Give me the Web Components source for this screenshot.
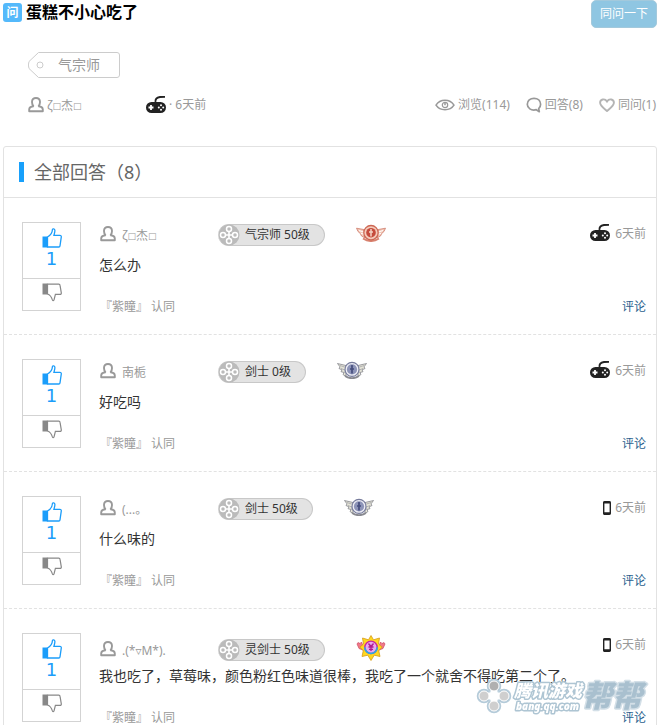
<!DOCTYPE html>
<html lang="zh-CN">
<head>
<meta charset="utf-8">
<title>蛋糕不小心吃了</title>
<style>
  html { height: 100vh; overflow: hidden; }
  body {
    margin: 0;
    background: #fff;
    color: #333;
    font: 12px/18px "Noto Sans", "Noto Sans CJK SC", "DejaVu Sans", sans-serif;
  }
  main { padding: 0 1px 0 3px; }
  small { font-size: 9px; line-height: 9px; font-family: "DejaVu Sans", sans-serif; vertical-align: 1px; }
</style>
</head>
<body>
<main>
  <question-header views="114" answers="8" likes="1" tag="气宗师" when="6天前">
    <span slot="title">蛋糕不小心吃了</span>
    <span slot="author">ζ<small>□</small>杰<small>□</small></span>
  </question-header>
  <answer-list total="8">
    <answer-item votes="1" role-name="气宗师 50级" rank="red" device="gamepad" when="6天前">
      <span slot="author">ζ<small>□</small>杰<small>□</small></span>
      怎么办
      <span slot="agree">『紫瞳』 认同</span>
    </answer-item>
    <answer-item votes="1" role-name="剑士 0级" rank="silver" device="gamepad" when="6天前">
      <span slot="author">南栀</span>
      好吃吗
      <span slot="agree">『紫瞳』 认同</span>
    </answer-item>
    <answer-item votes="1" role-name="剑士 50级" rank="silver" device="phone" when="6天前">
      <span slot="author">(...。</span>
      什么味的
      <span slot="agree">『紫瞳』 认同</span>
    </answer-item>
    <answer-item votes="1" role-name="灵剑士 50级" rank="star" device="phone" when="6天前">
      <span slot="author">.(*▿M*).</span>
      我也吃了，草莓味，颜色粉红色味道很棒，我吃了一个就舍不得吃第二个了。
      <span slot="agree">『紫瞳』 认同</span>
    </answer-item>
  </answer-list>
</main>
<site-watermark></site-watermark>

<script>
const ICONS = {
  user: [16, 16, `<path d="M5.600 9.600C4.600 8.300 4 6.600 4 5c0-2.600 1.500-4 4-4s4 1.400 4 4c0 1.600-.6 3.300-1.600 4.600" fill="none" stroke="#999" stroke-width="1.900"/>
    <path d="M5.600 9.200C2.600 9.400 1.200 10.600 1.200 12.600v1.600h13.600v-1.600c0-2-1.400-3.200-4.400-3.400" fill="none" stroke="#999" stroke-width="1.900" stroke-linejoin="round"/>`],
  gamepad: [22, 18, `<path d="M10.500 6C10 2.500 12 1.500 15 1l5-.1" fill="none" stroke="#222" stroke-width="1.800"/>
    <rect x="1" y="6" width="20" height="11" rx="5.500" fill="#222"/>
    <path d="M6 9v5M3.500 11.500h5" stroke="#fff" stroke-width="1.800"/>
    <g fill="#fff"><circle cx="16" cy="9.300" r="1"/><circle cx="16" cy="13.700" r="1"/><circle cx="13.800" cy="11.500" r="1"/><circle cx="18.200" cy="11.500" r="1"/></g>`],
  phone: [8, 14, `<rect x=".7" y=".7" width="6.600" height="12.600" rx="1" fill="#fff" stroke="#222" stroke-width="1.400"/>
    <path d="M.5 1.500h7M.5 12.300h7" stroke="#222" stroke-width="2"/>`],
  eye: [20, 12, `<g fill="none" stroke="#999" stroke-width="1.500"><path d="M1 6.200C5-.3 15-.3 19 6.200C15 12.300 5 12.300 1 6.200z"/>
    <circle cx="10" cy="6" r="2.700" stroke-width="1.200"/><path d="M10 3.500v2.700"/></g>`],
  bubble: [16, 16, `<path d="M10.300 12.700C5 14 1.300 11 1.300 7.300C1.300 3.800 4.200 1.300 8 1.300s6.600 2.500 6.600 6c0 1.900-.8 3.400-1.900 4.400l.6 3z" fill="none" stroke="#999" stroke-width="1.700" stroke-linejoin="round"/>`],
  heart: [16, 14, `<path d="M8 13C4.500 10 1.100 7.700 1.100 4.700C1.100 1.200 5.800 0 8 3.400C10.200 0 14.900 1.200 14.900 4.700C14.900 7.700 11.500 10 8 13z" fill="none" stroke="#b4b4b4" stroke-width="1.900"/>`],
  up: [20, 20, `<path d="M.5 8.500h5v11h-5z" fill="#1b9dfa"/><path d="M5.500 9C9 7 10.300 4.500 10.400 1.800c0-1.400 2.500-1.200 2.500.7c0 1.800-.6 3.300-1 4.900h6c1 0 1.500.6 1.400 1.500l-1.300 9c-.1.700-.5 1.100-1.200 1.100H5.500z" fill="none" stroke="#1b9dfa" stroke-width="1.300"/>`],
  down: [20, 19, `<path d="M.5.500h5v11h-5z" fill="#888"/><path d="M5.500 1.100h11.300c.7 0 1.100.4 1.200 1.100l1.300 7.700c.1.900-.4 1.500-1.400 1.500h-4.500l-1.300 5.300c-.3 1.300-1.300 1.300-1.700.2C9.600 14.300 8.500 11.900 5.500 11z" fill="none" stroke="#888" stroke-width="1.200"/>`],
  reel: [22, 22, `<circle cx="11" cy="11" r="10.500" fill="#bbb"/>
    <g fill="#bbb" stroke="#fff" stroke-width="1.500"><circle cx="11" cy="5" r="2.500"/><circle cx="11" cy="17" r="2.500"/><circle cx="5" cy="11" r="2.500"/><circle cx="17" cy="11" r="2.500"/></g>
    <path d="M11 8v6M8 11h6" stroke="#fff" stroke-width="1.600"/>`],
  red: [30, 18, `<g stroke="#c96f5d" stroke-width=".7" fill="#f3c8b7"><path d="M9 14L5.500 12 4.300 9.500 2 7.500.5 4.200l7.200 1.300z"/><path d="M21 14l3.500-2 1.200-2.500L28 7.500l1.500-3.300-7.200 1.300z"/></g>
    <path d="M3 6.500l6 2M5 9.500l5 1M27 6.500l-6 2M25 9.500l-5 1" stroke="#fff" stroke-width="1"/>
    <path d="M7 14.500q8 5 16 0" fill="none" stroke="#d8826f" stroke-width="2"/>
    <circle cx="15" cy="8.700" r="7.200" fill="#f4cbbb" stroke="#cd6754" stroke-width="1.300"/><circle cx="15" cy="8.700" r="4.800" fill="#c54b3c"/>
    <path d="M15 5v7.500M13 8h4" stroke="#f3d3c4" stroke-width="1.500"/>`],
  silver: [30, 18, `<g stroke="#777881" stroke-width=".7" fill="#e4e3d7"><path d="M9 15.500L6 13.500l1-2-3-.8 1-1.800L2 7.500l1-1.600L.5 2.500 9 4.500z"/><path d="M21 15.500l3-2-1-2 3-.8-1-1.800 3-1.400-1-1.600 2.500-3.400L21 4.500z"/></g>
    <path d="M3 4.500l6 2M4 7.500l5 2M7 11l3 1M27 4.500l-6 2M26 7.500l-5 2M23 11l-3 1" stroke="#a5a6a8" stroke-width=".8"/>
    <path d="M8 15q7 4.500 14 0" fill="none" stroke="#888990" stroke-width="1.800"/>
    <circle cx="15" cy="8.400" r="7" fill="#eeeef5" stroke="#777c9c" stroke-width="1.200"/><circle cx="15" cy="8.400" r="5.100" fill="#8d94b8"/>
    <path d="M15 5.500v7M13 8h4" stroke="#464e7d" stroke-width="1.700"/><circle cx="15" cy="5" r="1.100" fill="#464e7d"/>`],
  star: [30, 26, `<g fill="#f0798a" stroke="#c83b55" stroke-width=".6"><path d="M1 9l1-1.500 2 1 1.500-1.500 3.500 9-6-2.500z"/><path d="M29 9l-1-1.500-2 1-1.500-1.500-3.500 9 6-2.500z"/></g>
    <path d="M15 .5l2.500 4.300 6-1.800-1 6 3.700 3.200-3.500 3.300 1.300 6-5.800-1.300L15 25.500l-3.200-5.300L6 21.500l1.300-6-3.500-3.300L7.500 9l-1-6 6 1.800z" fill="#ffd81f" stroke="#d59a1b" stroke-width=".8"/>
    <circle cx="15" cy="12.300" r="6.200" fill="#e9a8ef" stroke="#c9259f" stroke-width="1.400"/><path d="M8.800 12.300a6.200 6.200 0 0 0 12.400 0" fill="none" stroke="#2baae4" stroke-width="1.600"/>
    <path d="M12.500 8.500l1.500 2h2l1.500-2M12.500 12h5M15 10.500v5.500M13 14.300h4" fill="none" stroke="#b01a8e" stroke-width="1.300"/>`]
};

function icon(name) {
  const [w, h, body] = ICONS[name];
  return `<svg class="${name}" width="${w}" height="${h}" viewBox="0 0 ${w} ${h}" aria-hidden="true">${body}</svg>`;
}

class QuestionHeader extends HTMLElement {
  constructor() {
    super();
    this.attachShadow({ mode: 'open' });
  }

  connectedCallback() {
    this.shadowRoot.innerHTML = `
      <style>
        :host { display: block; color: #999; }
        svg { display: block; flex: none; }
        .top { display: flex; align-items: flex-start; height: 52px; }
        .mark {
          width: 19px; height: 19px; margin: 3px 4px 0 0;
          border-radius: 3px;
          background: #54b9fb; color: #fff;
          font-size: 12px; font-weight: bold; line-height: 19px; text-align: center;
        }
        h1 { flex: 1; margin: 0; color: #000; font-size: 16px; line-height: 24px; }
        button {
          width: 66px; height: 28px; padding: 0;
          border: 1px solid #a3c9dc; border-radius: 5px;
          background: #8fc6e2; color: #fff;
          font: inherit; cursor: pointer;
        }
        .tag { display: inline-flex; position: relative; margin-left: 25px; color: #999; font-size: 14px; line-height: 26px; text-decoration: none; }
        .tag span { padding: 0 20px 0 30px; }
        .tag svg { position: absolute; inset: 0; }
        .meta { display: flex; align-items: center; height: 24px; margin: 15px 0 29px 25px; }
        .author { display: flex; align-items: center; gap: 3px; width: 117px; }
        .author span { padding-top: 2px; }
        .when { display: flex; align-items: center; gap: 2px; }
        .stats { display: flex; gap: 16px; margin: 0 1px 0 auto; }
        .stats span { display: flex; align-items: center; gap: 3px; }
      </style>
      <div class="top">
        <span class="mark">问</span>
        <h1><slot name="title"></slot></h1>
        <button type="button">同问一下</button>
      </div>
      <a class="tag" href="#tag">
        <svg width="92" height="26" viewBox="0 0 92 26" fill="none" stroke="#ccc" aria-hidden="true">
          <path d="M10.500.500H89a2.500 2.500 0 0 1 2.500 2.500v20a2.500 2.500 0 0 1-2.500 2.500H10.500L1 16.500Q-.3 13 1 9.500z"/><circle cx="12" cy="13" r="3"/>
        </svg>
        <span>${this.getAttribute('tag')}</span>
      </a>
      <div class="meta">
        <div class="author">${icon('user')}<span><slot name="author"></slot></span></div>
        <div class="when">${icon('gamepad')}<span>· ${this.getAttribute('when')}</span></div>
        <div class="stats">
          <span>${icon('eye')}浏览(${this.getAttribute('views')})</span>
          <span>${icon('bubble')}回答(${this.getAttribute('answers')})</span>
          <span>${icon('heart')}同问(${this.getAttribute('likes')})</span>
        </div>
      </div>
    `;
  }
}

class AnswerList extends HTMLElement {
  constructor() {
    super();
    this.attachShadow({ mode: 'open' });
  }

  connectedCallback() {
    this.shadowRoot.innerHTML = `
      <style>
        :host { display: block; border: 1px solid #e2e2e2; border-radius: 3px; }
        header { display: flex; align-items: center; gap: 10px; height: 50px; padding-left: 15px; border-bottom: 1px solid #e2e2e2; }
        header::before { content: ""; width: 5px; height: 20px; background: #18a0fb; }
        h2 { margin: 0; color: #666; font-size: 18px; font-weight: normal; line-height: 24px; }
      </style>
      <header><h2>全部回答（${this.getAttribute('total')}）</h2></header>
      <slot></slot>
    `;
  }
}

class VoteBox extends HTMLElement {
  constructor() {
    super();
    this.attachShadow({ mode: 'open' });
  }

  connectedCallback() {
    this.shadowRoot.innerHTML = `
      <style>
        :host { display: flex; flex-direction: column; width: 57px; border: 1px solid #d3d3d3; }
        button {
          display: flex; flex-direction: column; align-items: center;
          margin: 0; padding: 5px 0 0; border: 0;
          background: none; color: #1b9dfa; cursor: pointer;
          font: 18px/22px "DejaVu Sans", sans-serif;
        }
        svg { display: block; }
        .up-btn { height: 55px; }
        .down-btn { height: 32px; padding-top: 4px; border-top: 1px solid #d3d3d3; }
      </style>
      <button class="up-btn" type="button" aria-label="赞">${icon('up')}<span>${this.getAttribute('count')}</span></button>
      <button class="down-btn" type="button" aria-label="踩">${icon('down')}</button>
    `;
  }
}

class RolePill extends HTMLElement {
  constructor() {
    super();
    this.attachShadow({ mode: 'open' });
    this.shadowRoot.innerHTML = `
      <style>
        :host {
          display: inline-flex; align-items: center; gap: 5px;
          box-sizing: border-box; height: 22px; padding-right: 14px;
          border: 1px solid #c8c8c8; border-left: 0; border-radius: 11px;
          background: #e3e3e3; color: #333;
        }
        svg { display: block; }
      </style>
      ${icon('reel')}<span><slot></slot></span>
    `;
  }
}

class AnswerItem extends HTMLElement {
  constructor() {
    super();
    this.attachShadow({ mode: 'open' });
  }

  connectedCallback() {
    const rank = this.getAttribute('rank');
    this.shadowRoot.innerHTML = `
      <style>
        :host { display: flex; gap: 18px; height: 112px; padding: 24px 10px 0 18px; border-bottom: 1px dashed #e2e2e2; color: #999; }
        svg { display: block; flex: none; }
        vote-box { flex: none; align-self: flex-start; }
        .body { flex: 1; min-width: 0; }
        .head { display: flex; align-items: flex-start; height: 32px; }
        .who { display: flex; align-items: center; height: 26px; }
        .who.star { padding-top: 4px; }
        .author { display: flex; align-items: center; gap: 6px; width: 118px; padding-left: 1px; }
        .author svg { margin-bottom: 3px; }
        .author span { padding-top: 2px; }
        .badge { margin: 0 0 5px 31px; }
        .when { display: flex; align-items: center; gap: 4px; height: 24px; margin-left: auto; }
        .gamepad { margin-bottom: 2px; }
        p { margin: 0; color: #333; font-size: 14px; line-height: 22px; }
        footer { display: flex; justify-content: space-between; padding: 22px 0 0 1px; }
        a { color: #2b5f8e; text-decoration: none; }
      </style>
      <vote-box count="${this.getAttribute('votes')}"></vote-box>
      <div class="body">
        <div class="head">
          <div class="who ${rank}">
            <div class="author">${icon('user')}<span><slot name="author"></slot></span></div>
            <role-pill>${this.getAttribute('role-name')}</role-pill>
            <div class="badge">${icon(rank)}</div>
          </div>
          <div class="when">${icon(this.getAttribute('device'))}<span>${this.getAttribute('when')}</span></div>
        </div>
        <p><slot></slot></p>
        <footer><slot name="agree"></slot><a href="#comment">评论</a></footer>
      </div>
    `;
  }
}

class SiteWatermark extends HTMLElement {
  constructor() {
    super();
    this.attachShadow({ mode: 'open' });
    this.shadowRoot.innerHTML = `
      <style>
        :host { position: fixed; right: 10px; bottom: 10px; pointer-events: none; }
        svg { display: block; overflow: visible; }
        text { font-family: "Noto Sans CJK SC", sans-serif; font-weight: 900; font-style: italic; paint-order: stroke; stroke-linejoin: round; }
        .site { font-family: "Noto Sans", sans-serif; }
      </style>
      <svg width="172" height="38" viewBox="0 0 172 38">
        <g stroke="#b5cbd9" stroke-width="2.500" fill="#d5d8da">
          <circle cx="18" cy="9" r="6"/><circle cx="8" cy="19" r="6"/><circle cx="28" cy="19" r="6"/><circle cx="18" cy="29" r="6"/>
        </g>
        <path d="M18 10v18M9 19h18" stroke="#fff" stroke-width="7"/>
        <g fill="#cfcfcf" stroke="#fff" stroke-width="1"><circle cx="18" cy="9" r="5" fill="#b0b0b0"/><circle cx="8" cy="19" r="5"/><circle cx="28" cy="19" r="5"/><circle cx="18" cy="29" r="5"/></g>
        <g fill="#fff" stroke="#aec5d3" stroke-width="3">
          <text x="38" y="20" font-size="17">腾讯游戏</text>
          <text class="site" x="40" y="33" font-size="10">bang.qq.com</text>
        </g>
        <text x="106" y="30" font-size="30" fill="#a9c0cf" stroke="#d3dfe7" stroke-width="3">帮帮</text>
      </svg>
    `;
  }
}

customElements.define('question-header', QuestionHeader);
customElements.define('answer-list', AnswerList);
customElements.define('vote-box', VoteBox);
customElements.define('role-pill', RolePill);
customElements.define('answer-item', AnswerItem);
customElements.define('site-watermark', SiteWatermark);
</script>
</body>
</html>
